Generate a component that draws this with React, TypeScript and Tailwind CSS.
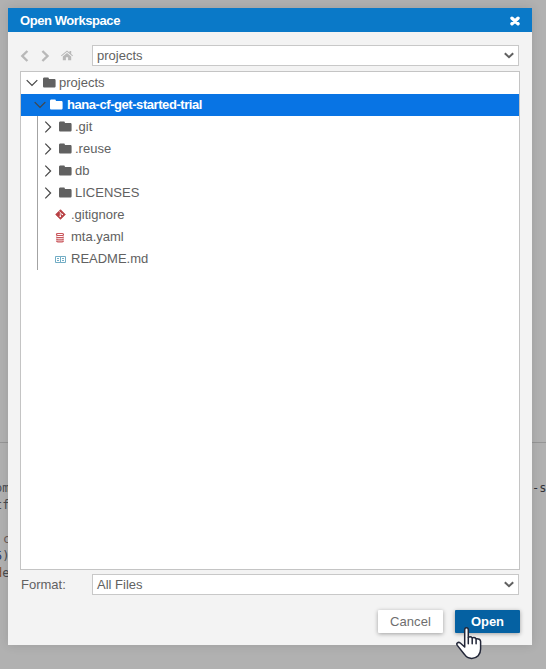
import type { ReactNode } from 'react';

function Folder({ className = '' }: { className?: string }) {
  return (
    <svg viewBox="0 0 13 11" className={`mb-px h-[11px] w-[13px] shrink-0 ${className}`} fill="currentColor">
      <path d="M1.4.4h3.2c.8 0 1.3.5 1.3 1.300v.4h5.300c.8 0 1.400.5 1.400 1.300v5.800c0 .8-.6 1.400-1.400 1.400H1.400C.6 10.600 0 10 0 9.200V1.800C0 1 .6.400 1.400.400Z" />
    </svg>
  );
}

function ArrowDown() {
  return (
    <svg viewBox="0 0 12 8" className="h-2 w-3 shrink-0" fill="none" stroke="#454545" strokeWidth="1.2">
      <path d="M.7 1.200 6 6.500 11.300 1.200" />
    </svg>
  );
}

function ArrowRight() {
  return (
    <svg viewBox="0 0 8 12" className="h-3 w-2 shrink-0" fill="none" stroke="#454545" strokeWidth="1.200">
      <path d="M1.300.700 6.600 6 1.300 11.300" />
    </svg>
  );
}

function GitIcon() {
  return (
    <svg viewBox="0 0 11 11" className="mb-px h-[11px] w-[11px] shrink-0">
      <path d="M5.500.700 10.300 5.500 5.500 10.300.700 5.500Z" fill="#b83f43" stroke="#b83f43" strokeWidth=".8" strokeLinejoin="round" />
      <path d="M4.200 2.300 7.400 5.500M5.300 3.700v4" stroke="#fff" strokeWidth=".7" />
      <circle cx="5.300" cy="7.400" r=".8" fill="#fff" />
      <circle cx="7.300" cy="5.500" r=".8" fill="#fff" />
    </svg>
  );
}

function DatabaseIcon() {
  return (
    <svg viewBox="0 0 11 11" className="h-[11px] w-[11px] shrink-0" fill="none" stroke="#c9555b">
      <rect x="1.500" y="1.500" width="7" height="2" rx="1" strokeWidth="1.200" />
      <path d="M1.500 4.600c.2.900.7 1.100 1.300 1.100h4.400c.6 0 1.100-.2 1.300-1.100M1.500 6.700c.2.900.7 1.100 1.300 1.100h4.400c.6 0 1.100-.2 1.300-1.100M1.500 8.700c.2.900.7 1.100 1.300 1.100h4.400c.6 0 1.100-.2 1.300-1.100" strokeWidth="1.300" />
    </svg>
  );
}

function BookIcon() {
  return (
    <svg viewBox="0 0 11 11" className="h-[11px] w-[11px] shrink-0" fill="none" stroke="#72adc5">
      <path d="M.500 2.500h5v6h-5ZM5.500 2.500h5v6h-5Z" />
      <path d="M2 4.500h2M2 6.500h2M7 4.500h2M7 6.500h2" />
    </svg>
  );
}

function Select({ value }: { value: string }) {
  return (
    <div className="flex h-[21px] w-[427px] items-center justify-between border border-[#c8c8c8] bg-white pr-1 pl-1">
      <span>{value}</span>
      <svg viewBox="0 0 10 7" className="h-[7px] w-[10px]" fill="none" stroke="#606060" strokeWidth="2">
        <path d="M.800 1.200 5 5.200 9.200 1.200" />
      </svg>
    </div>
  );
}

const folders = ['.git', '.reuse', 'db', 'LICENSES'];
const files: { name: string; icon: ReactNode }[] = [
  { name: '.gitignore', icon: <GitIcon /> },
  { name: 'mta.yaml', icon: <DatabaseIcon /> },
  { name: 'README.md', icon: <BookIcon /> },
];

function Backdrop() {
  return (
    <div className="absolute inset-0 overflow-hidden bg-[#b1b1b1] font-['DejaVu_Sans_Mono','Liberation_Mono',monospace] text-[12px] leading-[17px] whitespace-nowrap text-[#484b50]">
      <div className="absolute top-[442px] h-px w-full bg-[#969696]" />
      <span className="absolute top-[480px] left-[-5px]">om</span>
      <span className="absolute top-[497px] left-[-5px]">tf</span>
      <span className="absolute top-[531px] left-[3px] text-[#6a5a58]">c</span>
      <span className="absolute top-[548px] left-[-5px]"><span className="text-[#27386f]">5</span>)</span>
      <span className="absolute top-[565px] left-[-5px]"><span className="text-[#854e18]">d</span>e</span>
      <span className="absolute top-[480px] left-[532px] text-[#303238]">-s</span>
    </div>
  );
}

export default function App() {
  return (
    <main className="relative h-[669px] w-[546px] overflow-hidden font-['Liberation_Sans',Arial,sans-serif] text-[13px] text-[#616161]">
      <Backdrop />
      <div className="relative p-2">
        <section className="h-[637px] w-[524px] bg-[#f3f3f3] shadow-[0_0_10px_rgba(0,0,0,0.12)]">
          <header className="flex h-6 items-center justify-between bg-[#0a79c8] px-3 font-bold text-white">
            <h1 className="pt-px text-[13px] tracking-[-0.43px]">Open Workspace</h1>
            <svg viewBox="0 0 10 10" className="mt-px h-[10px] w-[10px]" stroke="#fff" strokeWidth="3.400" strokeLinecap="round">
              <path d="M2 2.200 8 7.800M8 2.200 2 7.800" />
            </svg>
          </header>
          <div className="px-3 pt-[13px]">
            <div className="flex h-[21px] items-center">
              <div className="flex w-[72px] items-center text-[#b8b8b8]">
                <svg viewBox="0 0 9 12" className="h-3 w-[9px]" fill="none" stroke="currentColor" strokeWidth="2.400">
                  <path d="M7.400 1 2.300 6 7.400 11" />
                </svg>
                <svg viewBox="0 0 9 12" className="ml-3 h-3 w-[9px]" fill="none" stroke="currentColor" strokeWidth="2.400">
                  <path d="M1.400 1 6.500 6 1.400 11" />
                </svg>
                <svg viewBox="0 0 12 11" className="ml-[11px] h-[11px] w-3" fill="currentColor">
                  <path d="M6 .5 8.500 2.600V1h1.700v3L12 5.600l-.6.700L6 1.800.600 6.300 0 5.600Z" />
                  <path d="M6 2.900 10.200 6.400v3.800H7.100V7.200H4.900v3H1.800V6.400Z" />
                </svg>
              </div>
              <Select value="projects" />
            </div>
            <div className="mt-[5px] h-[499px] w-[500px] border border-[#c4c4c4] bg-white">
              <div className="flex h-[22px] items-center pl-[5px]">
                <ArrowDown />
                <Folder className="ml-[5px]" />
                <span className="ml-[3px]">projects</span>
              </div>
              <div className="flex h-[22px] items-center bg-[#0874e4] pl-[13px] font-bold text-white">
                <ArrowDown />
                <Folder className="ml-[4px]" />
                <span className="ml-[4px] tracking-[-0.440px]">hana-cf-get-started-trial</span>
              </div>
              <div className="ml-4 border-l border-[#a3a3a3]">
                {folders.map((name) => (
                  <div key={name} className="flex h-[22px] items-center pl-[6px]">
                    <ArrowRight />
                    <Folder className="ml-[7px]" />
                    <span className="ml-[3px]">{name}</span>
                  </div>
                ))}
                {files.map(({ name, icon }) => (
                  <div key={name} className="flex h-[22px] items-center pl-[17px]">
                    {icon}
                    <span className="ml-[5px]">{name}</span>
                  </div>
                ))}
              </div>
            </div>
            <div className="mt-1 flex h-[21px] items-center">
              <span className="w-[72px] pl-px">Format:</span>
              <Select value="All Files" />
            </div>
            <div className="mt-[15px] flex justify-end gap-3">
              <button className="h-[23px] w-[65px] rounded-[1px] bg-white tracking-[0.100px] text-[#6e6e6e] shadow-[0_1px_4px_rgba(0,0,0,0.35)]">Cancel</button>
              <button className="h-[23px] w-[65px] rounded-[1px] bg-[#0561a2] font-bold tracking-[-0.1px] text-white shadow-[0_1px_4px_rgba(0,0,0,0.35)]">Open</button>
            </div>
          </div>
        </section>
      </div>
      <svg viewBox="0 0 26 33" className="absolute top-[627px] left-[456px] h-[33px] w-[26px]" fill="#fff" stroke="#222638" strokeWidth="1.500" strokeLinejoin="round" strokeLinecap="round">
        <path d="M8.700 20V3c0-2.900 3.600-2.900 3.600 0v7.200c1.300-.6 3.200-.2 3.900.7 1.400-.5 3.100-.1 3.900.9 2.500-.3 4.500.5 4.500 2.800v7.500c0 5.200-3.500 9.300-8.900 9.300-3.500 0-5.700-1.600-7.400-4.200L1.300 18.400c-1.500-2.200.9-3.900 3-2.400Z" />
        <path d="M12.300 10.500v6.200M16.200 11.200v5.500M20.100 12v4.700" />
      </svg>
    </main>
  );
}
